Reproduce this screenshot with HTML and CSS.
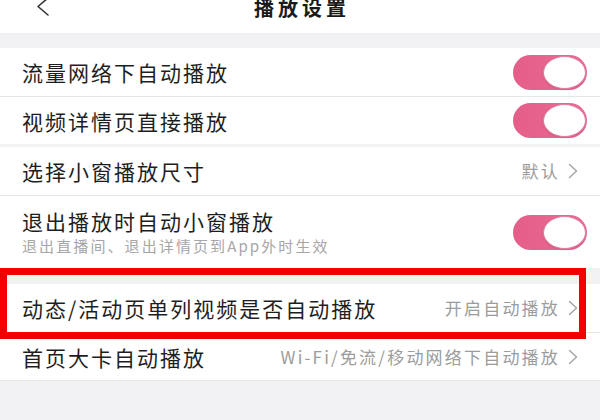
FILE: index.html
```html
<!DOCTYPE html>
<html lang="zh-CN">
<head>
<meta charset="utf-8">
<title>播放设置</title>
<link rel="stylesheet" href="styles.css">
</head>
<body>
<div class="page">
  <header class="nav">
    <span class="back">
      <svg width="14" height="20" viewBox="0 0 14 20"><polyline points="12,1 2,9.5 12,18" fill="none" stroke="#333" stroke-width="1.6" stroke-linecap="round" stroke-linejoin="round"/></svg>
    </span>
    <h1 class="title">播放设置</h1>
    <span></span>
  </header>
  <div class="band"></div>

  <section class="group">
    <div class="row">
      <span class="label">流量网络下自动播放</span>
      <span class="switch"><span class="knob"></span></span>
    </div>
    <div class="row">
      <span class="label">视频详情页直接播放</span>
      <span class="switch"><span class="knob"></span></span>
    </div>
  </section>

  <div class="gap-s"></div>

  <section class="group">
    <div class="row link">
      <span class="label">选择小窗播放尺寸</span>
      <span class="value">默认<svg class="chev" width="10" height="16" viewBox="0 0 10 16"><polyline points="1.5,1.5 8.5,8 1.5,14.5" fill="none" stroke="#a3a3a3" stroke-width="1.4" stroke-linecap="round" stroke-linejoin="round"/></svg></span>
    </div>
    <div class="row tall">
      <div class="texts">
        <span class="label">退出播放时自动小窗播放</span>
        <span class="sub">退出直播间、退出详情页到App外时生效</span>
      </div>
      <span class="switch"><span class="knob"></span></span>
    </div>
  </section>

  <div class="gap-l"></div>

  <section class="group last">
    <div class="row link">
      <span class="label">动态/活动页单列视频是否自动播放</span>
      <span class="value">开启自动播放<svg class="chev" width="10" height="16" viewBox="0 0 10 16"><polyline points="1.5,1.5 8.5,8 1.5,14.5" fill="none" stroke="#a3a3a3" stroke-width="1.4" stroke-linecap="round" stroke-linejoin="round"/></svg></span>
    </div>
    <div class="row link">
      <span class="label">首页大卡自动播放</span>
      <span class="value">Wi-Fi/免流/移动网络下自动播放<svg class="chev" width="10" height="16" viewBox="0 0 10 16"><polyline points="1.5,1.5 8.5,8 1.5,14.5" fill="none" stroke="#a3a3a3" stroke-width="1.4" stroke-linecap="round" stroke-linejoin="round"/></svg></span>
    </div>
  </section>

  <div class="highlight"></div>
</div>
</body>
</html>
```

FILE: styles.css
```css
html, body {
  margin: 0;
  padding: 0;
}
body {
  width: 600px;
  height: 420px;
  overflow: hidden;
  background: #f2f2f4;
  font-family: "Noto Sans CJK SC", "Noto Sans", sans-serif;
  color: #1e1e1e;
}
.page {
  position: relative;
  width: 600px;
  height: 420px;
}
.nav {
  height: 33px;
  background: #fff;
  display: grid;
  grid-template-columns: 1fr auto 1fr;
  align-items: start;
  box-shadow: 0 1px 2px rgba(0,0,0,0.03);
}
.back {
  padding-left: 36px;
  margin-top: -3px;
  display: flex;
}
.title {
  margin: -3px 0 0 0;
  padding-left: 4px;
  font-size: 20px;
  line-height: 22px;
  font-weight: 700;
  letter-spacing: 4px;
  color: #1a1a1a;
}
.band {
  height: 15px;
}
.gap-s {
  height: 3px;
}
.gap-l {
  height: 16px;
}
.group {
  background: #fff;
}
.group.last {
  border-bottom: 1px solid #e6e6e8;
}
.row {
  box-sizing: border-box;
  height: 48px;
  display: flex;
  align-items: center;
  justify-content: space-between;
  padding: 0 13px 0 22px;
}
.row + .row {
  border-top: 1px solid #e6e6e8;
}
.row.link {
  padding-right: 22px;
}
.row.tall {
  height: 73px;
  align-items: center;
}
.label {
  font-size: 21px;
  line-height: 26px;
  letter-spacing: 2px;
  color: #1e1e1e;
  white-space: nowrap;
}
.texts {
  display: flex;
  flex-direction: column;
}
.sub {
  margin-top: 2px;
  font-size: 15px;
  line-height: 20px;
  letter-spacing: 2.1px;
  color: #a6a6a6;
  white-space: nowrap;
}
.value {
  display: flex;
  align-items: center;
  font-size: 17px;
  line-height: 22px;
  letter-spacing: 2.2px;
  color: #9c9c9c;
  white-space: nowrap;
}
.chev {
  margin-left: 8px;
}
.switch {
  box-sizing: border-box;
  width: 74px;
  height: 35px;
  border-radius: 18px;
  background: linear-gradient(90deg, #e45e89 0%, #ea6b93 100%);
  display: flex;
  justify-content: flex-end;
  align-items: center;
  padding: 0 1px;
}
.knob {
  box-sizing: border-box;
  width: 43px;
  height: 33px;
  border-radius: 50%;
  background: #fff;
  border: 1px solid #e17d9c;
  box-shadow: 0 1px 2px rgba(150,40,80,0.2);
}
.highlight {
  position: absolute;
  left: 0;
  top: 268px;
  width: 586px;
  height: 71px;
  box-sizing: border-box;
  border: 7px solid #f20000;
  pointer-events: none;
}
```
